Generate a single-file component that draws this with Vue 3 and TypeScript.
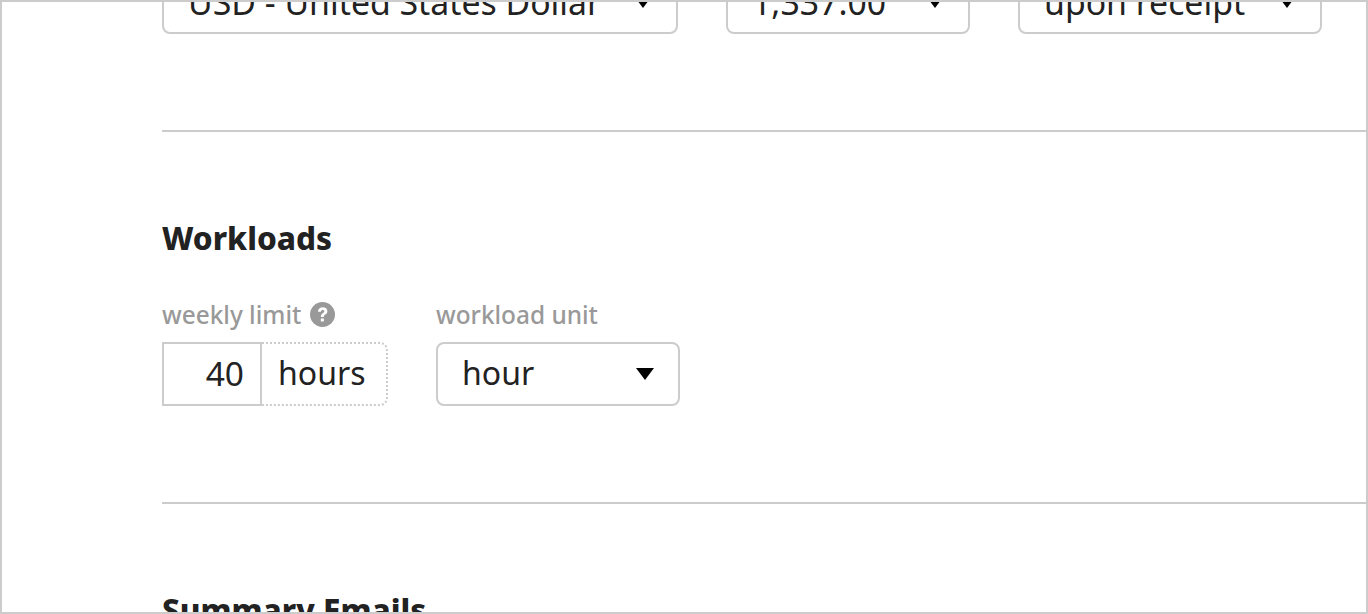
<script setup lang="ts">
interface Opt { text: string; width: number }
const currencyRow: Opt[] = [
  { text: 'USD - United States Dollar', width: 516 },
  { text: '1,337.00', width: 244 },
  { text: 'upon receipt', width: 304 },
]
</script>

<template>
  <div class="frame">
    <div class="content">
      <section class="top">
        <div class="row">
          <div v-for="o in currencyRow" :key="o.text" class="select wide" :style="{ width: o.width + 'px' }">
            <span>{{ o.text }}</span><i class="arrow"></i>
          </div>
        </div>
      </section>
      <section class="workloads">
        <h2>Workloads</h2>
        <div class="row">
          <div class="field">
            <label class="label">weekly limit
              <svg class="help" viewBox="0 0 24 24" width="25" height="25">
                <circle cx="12" cy="12" r="12" fill="#999" />
                <path d="M7.600 9.300c.2-2.700 2-4.300 4.600-4.300 2.700 0 4.500 1.600 4.500 3.800 0 1.600-.8 2.500-2 3.300-1.100.8-1.400 1.200-1.400 2.300h-2.900c0-1.900.6-2.800 1.800-3.700 1-.7 1.500-1.100 1.500-1.800 0-.8-.6-1.300-1.500-1.300-1 0-1.600.6-1.700 1.700z" fill="#fff" />
                <rect x="10.400" y="15.800" width="2.900" height="2.900" fill="#fff" />
              </svg>
            </label>
            <div class="combo">
              <div class="num">40</div>
              <div class="unit">hours</div>
            </div>
          </div>
          <div class="field">
            <label class="label">workload unit</label>
            <div class="select unit-select"><span>hour</span><i class="arrow"></i></div>
          </div>
        </div>
      </section>
      <section class="emails">
        <h2>Summary Emails</h2>
      </section>
    </div>
  </div>
</template>

<style>
html, body { margin: 0; background: #fff; }
</style>

<style scoped>
.frame {
  box-sizing: border-box;
  width: 1368px;
  height: 614px;
  border: 2px solid #ccc;
  overflow: hidden;
  background: #fff;
  font-family: "Noto Sans", sans-serif;
  color: #222;
}
.content { margin-top: -32px; padding-left: 160px; }
.row { display: flex; gap: 48px; }
.top { height: 160px; border-bottom: 2px solid #ccc; }
.select {
  box-sizing: border-box;
  height: 64px;
  border: 2px solid #ccc;
  border-radius: 8px;
  padding: 0 24px;
  display: flex;
  align-items: center;
  justify-content: space-between;
  font-size: 32px;
  background: #fff;
}
.select.wide { font-size: 33.800px; }
.arrow {
  width: 0;
  height: 0;
  flex: none;
  border-left: 9px solid transparent;
  border-right: 9px solid transparent;
  border-top: 12px solid #000;
}
.workloads { height: 370px; border-bottom: 2px solid #ccc; }
h2 {
  margin: 0;
  font-size: 31.500px;
  line-height: 44px;
  font-weight: 800;
  color: #222;
}
.workloads h2 { padding-top: 84px; }
.workloads .row { margin-top: 35px; }
.field { display: flex; flex-direction: column; }
.label {
  display: flex;
  align-items: center;
  gap: 9px;
  height: 38px;
  font-size: 24.400px;
  font-weight: 500;
  color: #999;
  margin-bottom: 9px;
}
.help { display: block; }
.combo { display: flex; height: 64px; box-sizing: border-box; }
.num {
  box-sizing: border-box;
  width: 100px;
  border: 2px solid #ccc;
  font-size: 33.500px;
  line-height: 58px;
  text-align: right;
  padding-right: 16px;
}
.unit {
  box-sizing: border-box;
  width: 126px;
  border: 2px dotted #ccc;
  border-left: 0;
  border-radius: 0 8px 8px 0;
  font-size: 32px;
  line-height: 58px;
  padding-left: 16px;
}
.unit-select { width: 244px; }
.unit-select span { transform: translateY(-2px); }
.emails h2 { padding-top: 84px; }
</style>
